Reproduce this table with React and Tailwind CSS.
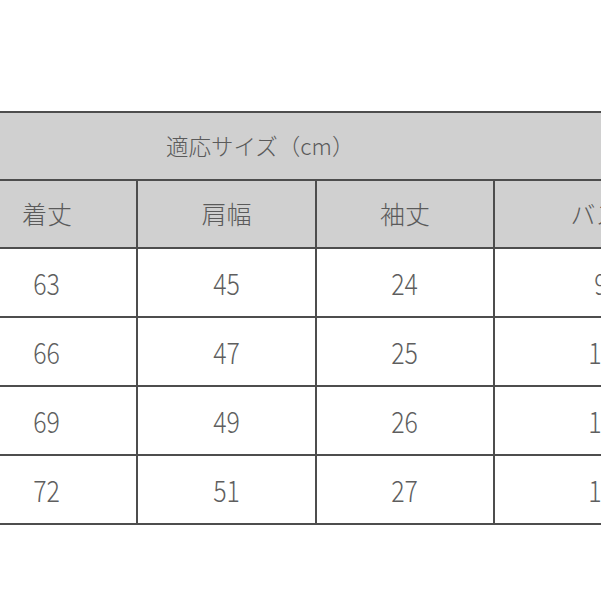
import React from "react";

const heads = ["着丈", "肩幅", "袖丈", "バスト"];
const rows = [
  ["63", "45", "24", "98"],
  ["66", "47", "25", "104"],
  ["69", "49", "26", "110"],
  ["72", "51", "27", "116"],
];
const widths = ["w-[180px]", "w-[179px]", "w-[178px]", "w-[228px]"];

export default function App() {
  return (
    <div className="w-[601px] h-[601px] bg-white overflow-hidden">
      <div className="mt-[111px] ml-[-42px] w-[765px] border-t-2 border-[#4d4d4d] text-[#5a5a5a]">
        <div className="h-[68px] bg-[#d0d0d0] border-b-2 border-[#4d4d4d] flex items-center pl-[208px] text-[22.5px] font-light [font-family:'Noto_Sans_CJK_JP',sans-serif]">
          適応サイズ（cm）
        </div>
        <div className="flex h-[68px] bg-[#d0d0d0] border-b-2 border-[#4d4d4d]">
          {heads.map((h, i) => (
            <div
              key={h}
              className={`${widths[i]} shrink-0 flex items-center justify-center border-r-2 border-[#4d4d4d] text-[25px] font-light [font-family:'Noto_Sans_CJK_JP',sans-serif]`}
            >
              {h}
            </div>
          ))}
        </div>
        {rows.map((r, ri) => (
          <div key={ri} className="flex h-[69px] bg-white border-b-2 border-[#4d4d4d]">
            {r.map((v, i) => (
              <div
                key={i}
                className={`${widths[i]} shrink-0 flex items-center justify-center border-r-2 border-[#4d4d4d] text-[29px] font-light text-[#5e5e5e] [font-family:'Noto_Sans_CJK_JP',sans-serif]`}
              >
                <span className="inline-block scale-x-[0.86]">{v}</span>
              </div>
            ))}
          </div>
        ))}
      </div>
    </div>
  );
}
